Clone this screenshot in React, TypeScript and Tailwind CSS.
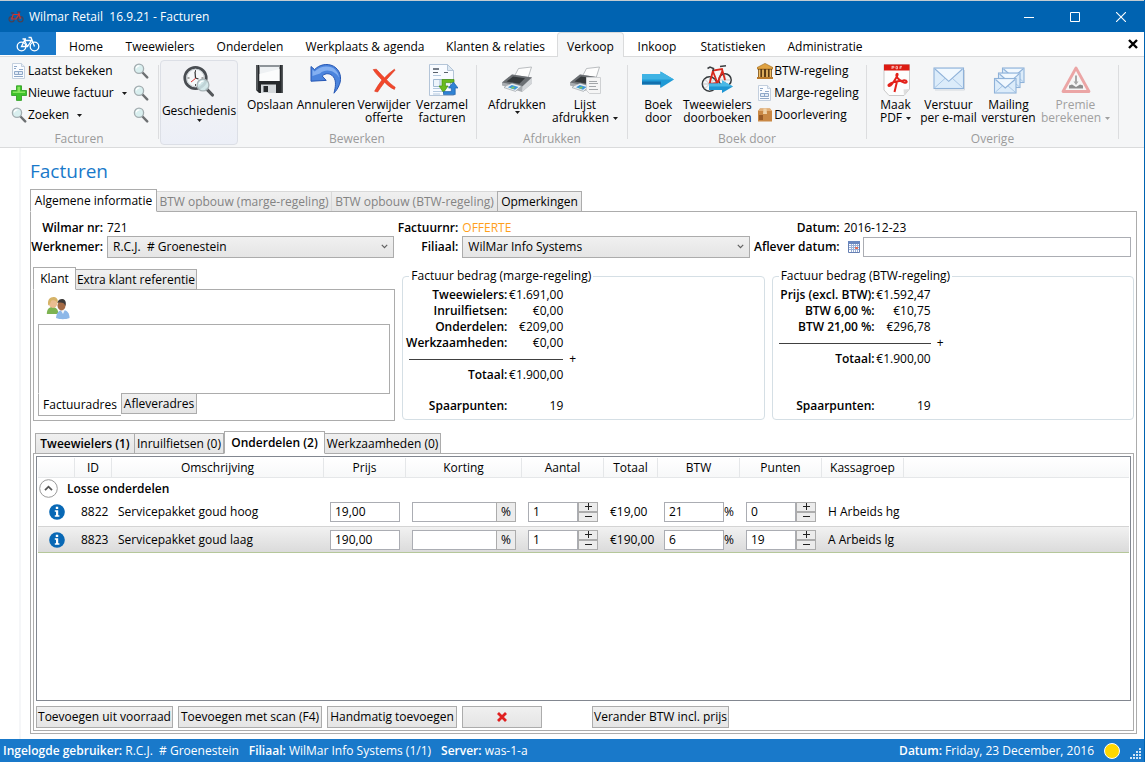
import { useState } from "react";
import type { ReactNode } from "react";
import clsx from "clsx";

/* ---------- icons ---------- */

function Magnifier({ className = "w-4 h-4" }: { className?: string }) {
    return (
        <svg viewBox="0 0 16 16" className={className} aria-hidden="true">
            <path d="M9.5 9.5 L14.2 14.4" stroke="#6d7072" strokeWidth="2.4" strokeLinecap="round" />
            <circle cx="6" cy="5.8" r="4.6" fill="#d9efef" stroke="#a3adb0" strokeWidth="1.3" />
            <path d="M3.2 5.4 A3 3 0 0 1 6.4 2.9" fill="none" stroke="#fff" strokeWidth="1.2" />
        </svg>
    );
}

function InvoiceIcon({ lines = "#8fa8c8" }: { lines?: string }) {
    return (
        <svg viewBox="0 0 16 16" className="w-4 h-4" aria-hidden="true">
            <path d="M1.5 .5 H10.5 L13.5 3.5 V15.5 H1.5 Z" fill="#fafcff" stroke="#c3cfde" />
            <path d="M10.5 .5 V3.5 H13.5" fill="#e6edf5" stroke="#c3cfde" />
            <path d="M3 3.5 H6 M3 5.5 H5 M8 6.5 H12 M3 13.5 H12" stroke={lines} />
            <path d="M3.5 8.5 H11.5 V11.5 H3.5 Z M7.5 8.5 V11.5" fill="#e2ebf6" stroke={lines} />
        </svg>
    );
}

function PlusIcon() {
    return (
        <svg viewBox="0 0 16 16" className="w-4 h-4" aria-hidden="true">
            <path d="M5.5 .8 H10.5 V5.5 H15.5 V10.5 H10.5 V15.4 H5.5 V10.5 H.6 V5.5 H5.5 Z" fill="#3fc32b" stroke="#2a9a1c" strokeWidth=".8" />
            <path d="M6.5 1.8 H9 V6.6 H14 V8 H1.8 V6.6 H6.5 Z" fill="#86e45f" />
        </svg>
    );
}

function HistoryIcon() {
    return (
        <svg viewBox="0 0 32 32" className="w-8 h-8" aria-hidden="true">
            <circle cx="12.5" cy="13" r="10.7" fill="#f6f8f9" stroke="#494d52" strokeWidth="2.8" />
            <circle cx="12.5" cy="13" r="8.8" fill="none" stroke="#b8bfc4" strokeWidth=".8" />
            <path d="M12.5 5 V7 M4.5 13 H6.5 M12.5 19 V21 M18.5 13 H20.5" stroke="#555" />
            <path d="M12.5 13 L12 6.6 M12.5 13 L15.5 14" stroke="#333" strokeWidth="1.2" />
            <path d="M12.8 13.2 L8 17" stroke="#d33" />
            <path d="M24 24.4 L29.4 30" stroke="#55585b" strokeWidth="3.2" strokeLinecap="round" />
            <circle cx="20" cy="20" r="5.9" fill="#cfe6e8" fillOpacity=".88" stroke="#a9b4b7" strokeWidth="1.3" />
            <path d="M16.5 19 A4 4 0 0 1 20.5 16" fill="none" stroke="#fff" strokeWidth="1.2" />
        </svg>
    );
}

function SaveIcon() {
    return (
        <svg viewBox="0 0 32 32" className="w-8 h-8" aria-hidden="true">
            <path d="M2 1 H29 V29 H5 L2 26 Z" fill="#25282b" />
            <path d="M2 1 H4 V26 H2 Z M27.5 1 H29 V29 H27.5 Z" fill="#54585b" />
            <path d="M5.5 1 H25.5 V17 H5.5 Z" fill="#eef1f3" />
            <path d="M5.5 1 H25.5 V3 H5.5 Z" fill="#8e9499" />
            <path d="M5.5 10 L25.5 5 V17 H5.5 Z" fill="#fbfcfc" />
            <path d="M7 20.5 H22 V29 H7 Z" fill="#d4d8db" />
            <path d="M9.5 22 H14 V28 H9.5 Z" fill="#26292c" />
        </svg>
    );
}

function UndoIcon() {
    return (
        <svg viewBox="0 0 32 32" className="w-8 h-8" aria-hidden="true">
            <path
                d="M1 2.5 L4.6 5.6 C9 .8 17 -1.2 23.5 2.2 C30.4 6 32 14 29.4 20.5 C28 24.2 26.2 26.8 24 29.2 C25.5 23 26.6 17 23.4 12.8 C20.4 9 15.6 8.7 12.2 12 L16.2 16.4 L1 17.2 Z"
                fill="#4b84dd"
                stroke="#2657b4"
            />
            <path d="M2.4 5.6 L4.7 7.5 C9 3 16 1 22 3.6 C26 5.6 28.6 9.5 29 13.5 C25.5 7 16 3.8 10 9.5 L2.4 12 Z" fill="#84b0f1" />
        </svg>
    );
}

function RedCrossIcon() {
    return (
        <svg viewBox="0 0 32 32" className="w-8 h-8" aria-hidden="true">
            <path
                d="M5.2 5.6 L8.4 5.2 C11.2 8.4 14 11.4 16.6 13.8 C19.4 10.8 22.8 7.6 26.4 5.2 L27 6.2 C23.8 9.8 21 12.6 18.5 15.7 C21.2 18.6 24.4 21.4 27.2 23.2 L26.4 25.4 C22.8 24 19.5 21.1 16.6 18.2 C14 21.6 11.6 25 9.6 28 L6.6 27.2 C8.8 23 11.4 19.4 14 16 C10.8 12.8 7.8 9.8 5.2 5.6 Z"
                fill="#f2472b"
                stroke="#d9351c"
                strokeWidth=".6"
            />
        </svg>
    );
}

function CollectIcon() {
    return (
        <svg viewBox="0 0 32 32" className="w-8 h-8" aria-hidden="true">
            <path d="M3.5 .5 H21.5 L27.5 6.5 V31.5 H3.5 Z" fill="#f8fbff" stroke="#b4c5d8" />
            <path d="M21.5 .5 V6.5 H27.5 Z" fill="#dde8f2" stroke="#b4c5d8" />
            <path d="M7 5 H13" stroke="#56606c" strokeWidth="1.6" />
            <path d="M7 8.5 H12 M18 8.5 H22" stroke="#56606c" />
            <path d="M7 11.5 H15 M7 24.5 H14 M7 27.5 H18 M7 30 H14" stroke="#b3c8de" />
            <path d="M7.5 15.5 H24.5 V22.5 H7.5 Z M14 15.5 V22.5" fill="#edf4fb" stroke="#9fb9d2" />
            <path d="M28 15.5 H16 V22 H13 L17.5 28.5 L22 22 H19.4 V18.6 H28 Z" fill="#6abb1d" stroke="#3f8f10" strokeWidth=".7" />
            <path d="M17.5 30.6 V27.6 H25.3 V24 H22.6 L27.4 18 L32 24 H29.2 V30.6 Z" fill="#2f83d5" stroke="#1b5fa9" strokeWidth=".7" />
        </svg>
    );
}

function PrinterIcon({ list = false }: { list?: boolean }) {
    return (
        <svg viewBox="0 0 32 32" className="w-8 h-8" aria-hidden="true">
            <path d="M13 13 L17.5 4.5 L30.5 3 L27 14 Z" fill="#fdfdfd" stroke="#a9adb1" strokeWidth=".8" />
            <path d="M1 18.5 L11 10.5 L31 13.5 V19.5 L21 28 L1 21.5 Z" fill="#a9adb1" />
            <path d="M1 18.5 L11 10.5 L31 13.5 L21.5 22.5 Z" fill="#6b6f73" />
            <path d="M5.5 17.6 L12 12.4 L24 14.3 L18.4 19.8 Z" fill="#35393c" />
            <path d="M21.5 22.5 L31 13.5 V19.5 L21 28 Z" fill="#d3d6d9" />
            <path d="M5.5 21.6 L11 19.2 L20.5 22 L14.5 27.4 L3 23.6 Z" fill="#e9eef2" stroke="#8f969b" strokeWidth=".6" />
            <path d="M7 23.3 L10.8 21 L17.5 23 L14 25.8 Z" fill="#3c96d8" />
            <path d="M9.5 24 L12 22.4 L14 23.1 L12 25 Z" fill="#79c465" />
            {list && (
                <>
                    <path d="M17.5 13.5 H31.5 V29.5 H20.5 L17.5 26.5 Z" fill="#f5f5f5" stroke="#cfd1d3" />
                    <path d="M20 17.5 H28 M20 19.5 H29 M20 22.5 H27 M20 25.5 H29" stroke="#a3a6a9" />
                </>
            )}
        </svg>
    );
}

function ArrowIcon() {
    return (
        <svg viewBox="0 0 32 32" className="w-8 h-8" aria-hidden="true">
            <path d="M0 10 H18.5 V7.5 L32 15.5 L18.5 24 V20.5 H0 Z" fill="#1f9ad6" />
            <path d="M0 10 H18.5 V7.5 L32 15.5 H0 Z" fill="#3fb3e4" />
            <path d="M0 17.5 H19 V22.8 L18.5 24 V20.5 H0 Z" fill="#1270ae" />
        </svg>
    );
}

function BikeArrowIcon() {
    return (
        <svg viewBox="0 0 32 32" className="w-8 h-8" aria-hidden="true">
            <g fill="none" stroke="#34383b" strokeWidth="1.5">
                <circle cx="8.5" cy="20" r="7.2" />
                <circle cx="24" cy="16" r="6.2" />
            </g>
            <g fill="none" stroke="#a7abae" strokeWidth=".6">
                <path d="M8.5 13 V27 M1.5 20 H15.5 M3.5 15 L13.5 25 M13.5 15 L3.5 25 M24 10 V22 M18 16 H30" />
            </g>
            <path d="M8.5 20 L12 6.5 L21 5 L24 16 M12 7.5 L16.5 19 L21.5 6.5 M8.5 20 L16.5 19" fill="none" stroke="#d9281c" strokeWidth="1.8" />
            <path d="M6.5 4.5 L9 3 L12.5 4.5 L12 7 M19 2.5 L25 1.8" fill="none" stroke="#3b3e41" strokeWidth="1.5" />
            <path d="M8 19.5 H21 V16.5 L32 22.5 L21 29 V26 H8 Z" fill="#1e96d3" />
            <path d="M8 19.5 H21 V16.5 L32 22.5 H8 Z" fill="#49b8e6" />
        </svg>
    );
}

function BankIcon() {
    return (
        <svg viewBox="0 0 16 16" className="w-4 h-4" aria-hidden="true">
            <path d="M0 4.6 L8 .4 L16 4.6 V6 H0 Z" fill="#e0a343" stroke="#9b6418" strokeWidth=".6" />
            <path d="M1 6 H15 V14 H1 Z" fill="#5b3a14" />
            <path d="M2.5 6.5 V14 M6 6.5 V14 M10 6.5 V14 M13.5 6.5 V14" stroke="#f2c068" strokeWidth="1.7" />
            <path d="M0 14 H16 V16 H0 Z" fill="#b9792a" />
        </svg>
    );
}

function BoxIcon() {
    return (
        <svg viewBox="0 0 16 16" className="w-4 h-4" aria-hidden="true">
            <path d="M1 4 L3 1.5 H13 L15 4 V14.5 H1 Z" fill="#c98845" />
            <path d="M1 4 L3 1.5 H13 L15 4 Z" fill="#e3b078" />
            <path d="M6.5 1.5 H9.5 L10 7 H6 Z" fill="#f0d2a8" />
            <path d="M2 8 H6 V13 H2 Z" fill="#9a5b26" />
        </svg>
    );
}

function PdfIcon() {
    return (
        <svg viewBox="0 0 32 32" className="w-8 h-8" aria-hidden="true">
            <path d="M4 .5 H29.5 V25 L24 31.5 H9 L4 26 Z" fill="#fdfdfd" stroke="#c9c9c9" />
            <path d="M4 .5 H29.5 V6.5 H4 Z" fill="#dd1b12" />
            <path d="M12 2 V5 M12 2.4 H14 V3.8 H12 M16 2.4 H17.5 V4.8 H16 Z M20 5 V2.4 H22 M20 3.8 H21.6" fill="none" stroke="#fbd0cc" strokeWidth=".8" />
            <path
                d="M17.2 9.5 C14.4 11.5 19 17 24 18.5 C28 19.4 27.5 15.8 23 16.4 C17 17 11 18.2 8.8 20.6 C7.4 22.6 10.4 22.4 12 20 C15.8 14.6 18.8 10.4 17.2 9.5 M17 17.5 L14.5 28"
                fill="none"
                stroke="#e3211a"
                strokeWidth="2"
            />
            <path d="M24 31.5 L23.5 25.5 L29.5 25 Z" fill="#dedede" />
        </svg>
    );
}

function Envelope({ x, y, w, h }: { x: number; y: number; w: number; h: number }) {
    return (
        <g>
            <rect x={x} y={y} width={w} height={h} fill="#dcecfa" stroke="#8fb2d9" strokeWidth="1.1" />
            <path
                d={`M${x + 1} ${y + h - 1} L${x + w * 0.38} ${y + h * 0.5} M${x + w - 1} ${y + h - 1} L${x + w * 0.62} ${y + h * 0.5}`}
                stroke="#a9c7e6"
            />
            <path d={`M${x + 1} ${y + 1} L${x + w / 2} ${y + h * 0.65} L${x + w - 1} ${y + 1}`} fill="#f1f8fe" stroke="#8fb2d9" strokeWidth="1.1" />
        </g>
    );
}

function MailIcon() {
    return (
        <svg viewBox="0 0 32 32" className="w-8 h-8" aria-hidden="true">
            <path d="M2 26 H31.5 V6" fill="none" stroke="#d3d8dd" />
            <Envelope x={1} y={4} w={29.5} h={20.5} />
        </svg>
    );
}

function MailingIcon() {
    return (
        <svg viewBox="0 0 32 32" className="w-8 h-8" aria-hidden="true">
            <Envelope x={9.5} y={4} w={21.5} h={14.5} />
            <Envelope x={5.5} y={9} w={21.5} h={14.5} />
            <Envelope x={1.5} y={14.5} w={21.5} h={14.5} />
        </svg>
    );
}

function PremiumIcon() {
    return (
        <svg viewBox="0 0 32 32" className="w-8 h-8" aria-hidden="true">
            <path d="M16 4 L29 27.5 H3 Z" fill="#f6f6f6" stroke="#eba5a5" strokeWidth="2.8" strokeLinejoin="round" />
            <path d="M9 21.5 L12 20.5 L16 23 L20 20.5 L23 21.5 V24.5 H9 Z" fill="#8d8d8d" />
            <path d="M15 11.5 H17 V18.5 H15 Z M13.5 17.5 H18.5 L16 21 Z" fill="#a7a7a7" />
        </svg>
    );
}

function WhiteBike() {
    return (
        <svg viewBox="0 0 24 16" className="w-6 h-4" fill="none" stroke="#fff" strokeWidth="1.3" aria-hidden="true">
            <circle cx="5.5" cy="10.5" r="4.3" />
            <circle cx="18.5" cy="10.5" r="4.3" />
            <path d="M5.5 10.5 L8.5 4.5 H15.5 L11.5 10.5 Z M8.5 4.5 L11.5 10.5 M18.5 10.5 L15 1.5 H12.5 M6.5 3 H10" />
        </svg>
    );
}

function AppIcon() {
    return (
        <svg viewBox="0 0 16 16" className="w-4 h-4" fill="none" aria-hidden="true">
            <circle cx="3.6" cy="10.2" r="2.6" stroke="#4a4152" strokeWidth="1.2" />
            <circle cx="12.4" cy="10.2" r="2.6" stroke="#4a4152" strokeWidth="1.2" />
            <path d="M3.6 10 L5.2 5.5 H11 L8 10 Z M12.4 10 L10.6 3" stroke="#d4322c" strokeWidth="1.2" />
            <path d="M2.8 4 H6.2 M9 3 H12.4" stroke="#6d2a35" strokeWidth="1.2" />
        </svg>
    );
}

function PeopleIcon() {
    return (
        <svg viewBox="0 0 24 24" className="w-6 h-6" aria-hidden="true">
            <path d="M.8 18 C.8 13.5 3 11 6.5 11 C10 11 12 13 12.5 18 Z" fill="#7db352" />
            <ellipse cx="7" cy="7" rx="4.3" ry="5" fill="#e9bd91" />
            <path d="M2.2 9.5 C1.2 3.5 4 .8 8 1 C11.5 1.4 12.3 4.5 11.8 7.5 C10.5 4.4 8 3.6 5.4 4.6 C4.2 6.4 4.6 8.4 2.2 9.5 Z" fill="#d6b368" />
            <path d="M10 22 C10.4 17 12.6 14 17 14 C21.2 14 23.4 17 23.6 22 C19.5 23.6 14 23.6 10 22 Z" fill="#8db8e8" />
            <path d="M14.6 14 L17 18 L18.8 14 Z" fill="#f2f6fa" />
            <ellipse cx="15.5" cy="9.6" rx="4" ry="4.9" fill="#a56b45" />
            <path d="M11.5 7 C12 3.6 14.5 2.8 16.5 3 C20 3.6 20.4 7.5 19.4 10 C18.6 6.8 15.5 6 11.5 7 Z" fill="#3d3a38" />
        </svg>
    );
}

function CalendarIcon() {
    return (
        <svg viewBox="0 0 12 12" className="w-3 h-3" aria-hidden="true">
            <path d="M.5 .5 H11.5 V11.5 H.5 Z" fill="#fff" stroke="#6680b3" />
            <path d="M0 0 H12 V3 H0 Z" fill="#6a87bf" />
            <path d="M3.5 3 V11 M5.5 3 V11 M7.5 3 V11 M9.5 3 V11 M1 4.5 H11 M1 6.5 H11 M1 8.5 H11" stroke="#9bb0d6" />
            <path d="M7 6 H10 V8 H7 Z" fill="#e2705c" />
        </svg>
    );
}

function InfoIcon() {
    return (
        <svg viewBox="0 0 16 16" className="w-4 h-4" aria-hidden="true">
            <circle cx="8" cy="8" r="7.8" fill="#0868b5" />
            <path d="M6.8 2.8 H9.2 V4.9 H6.8 Z M5.8 6.3 H9.2 V11.3 H10.4 V12.8 H5.8 V11.3 H7 V7.7 H5.8 Z" fill="#fff" />
        </svg>
    );
}

function Caret({ muted = false }: { muted?: boolean }) {
    return (
        <svg viewBox="0 0 5 3" className="inline-block w-[5px] h-[3px] shrink-0" aria-hidden="true">
            <path d="M0 0 H5 L2.5 3 Z" fill={muted ? "#a0a0a0" : "#1a1a1a"} />
        </svg>
    );
}

/* ---------- ribbon ---------- */

const ribbonTabs = [
    { label: "Home", width: "w-[60px]" },
    { label: "Tweewielers", width: "w-[88px]" },
    { label: "Onderdelen", width: "w-[92px]" },
    { label: "Werkplaats & agenda", width: "w-[138px]" },
    { label: "Klanten & relaties", width: "w-[123px]" },
    { label: "Verkoop", width: "w-[67px]" },
    { label: "Inkoop", width: "w-[66px]" },
    { label: "Statistieken", width: "w-[86px]" },
    { label: "Administratie", width: "w-[98px]" },
];

function RibbonGroup({ title, width, children }: { title: string; width: string; children: ReactNode }) {
    return (
        <section className={clsx("flex shrink-0", width)}>
            <div className="flex flex-col flex-1 pt-[7px] min-w-0">
                <div className="flex flex-1 justify-center">{children}</div>
                <h2 className="h-4 leading-4 text-center text-[#9b9b9b]">{title}</h2>
            </div>
            <div className="w-px mt-2 mb-2 bg-[#dcdddf]" />
        </section>
    );
}

type BigButtonProps = {
    icon: ReactNode;
    label: string;
    width: string;
    caret?: "inline" | "below";
    disabled?: boolean;
};

function BigButton({ icon, label, width, caret, disabled = false }: BigButtonProps) {
    return (
        <button
            disabled={disabled}
            className={clsx("flex flex-col items-center shrink-0 h-[62px] leading-[13px]", width, disabled && "text-[#a0a0a0]")}
        >
            {icon}
            <span className="mt-0.5 whitespace-pre text-center">
                {label}
                {caret === "inline" && (
                    <span className="ml-1 align-middle leading-[0]">
                        <Caret muted={disabled} />
                    </span>
                )}
            </span>
            {caret === "below" && <Caret />}
        </button>
    );
}

function SmallButton({ icon, label, caret = false }: { icon: ReactNode; label: string; caret?: boolean }) {
    return (
        <button className="flex items-center h-[22px] whitespace-nowrap">
            {icon}
            <span className="ml-px">{label}</span>
            {caret && (
                <span className="ml-2 leading-none">
                    <Caret />
                </span>
            )}
        </button>
    );
}

function Ribbon() {
    return (
        <div className="flex h-[91px] bg-[#f5f6f7] border-b border-[#dadbdc] overflow-hidden">
            <RibbonGroup title="Facturen" width="w-[159px]">
                <div className="flex flex-1 justify-between -mt-1 pl-[11px] pr-[9px]">
                    <div>
                        <SmallButton icon={<InvoiceIcon />} label="Laatst bekeken" />
                        <SmallButton icon={<PlusIcon />} label="Nieuwe factuur" caret />
                        <SmallButton icon={<Magnifier />} label="Zoeken" caret />
                    </div>
                    <div>
                        {["Laatst bekeken", "Factuur", "Klant"].map((item) => (
                            <button key={item} aria-label={`${item} zoeken`} className="flex items-center h-[22px]">
                                <Magnifier />
                            </button>
                        ))}
                    </div>
                </div>
            </RibbonGroup>

            <button className="flex flex-col items-center shrink-0 w-[78px] mt-[3px] mb-0.5 ml-px pt-1 border border-[#dcdfe6] rounded-sm bg-linear-to-b from-[#f1f2f5] from-45% to-[#eceff7]">
                <HistoryIcon />
                <span className="mt-1.5">Geschiedenis</span>
                <Caret />
            </button>

            <RibbonGroup title="Bewerken" width="w-[239px]">
                <BigButton icon={<SaveIcon />} label="Opslaan" width="w-[54px]" />
                <BigButton icon={<UndoIcon />} label="Annuleren" width="w-[58px]" />
                <BigButton icon={<RedCrossIcon />} label={"Verwijder\nofferte"} width="w-[58px]" />
                <BigButton icon={<CollectIcon />} label={"Verzamel\nfacturen"} width="w-[58px]" />
            </RibbonGroup>
            <RibbonGroup title="Afdrukken" width="w-[151px]">
                <BigButton icon={<PrinterIcon />} label="Afdrukken" width="w-[66px]" caret="below" />
                <BigButton icon={<PrinterIcon list />} label={"Lijst\nafdrukken"} width="w-[70px]" caret="inline" />
            </RibbonGroup>
            <RibbonGroup title="Boek door" width="w-[239px]">
                <BigButton icon={<ArrowIcon />} label={"Boek\ndoor"} width="w-[46px]" />
                <BigButton icon={<BikeArrowIcon />} label={"Tweewielers\ndoorboeken"} width="w-[72px]" />
                <div className="-mt-1 ml-1">
                    <SmallButton icon={<BankIcon />} label="BTW-regeling" />
                    <SmallButton icon={<InvoiceIcon />} label="Marge-regeling" />
                    <SmallButton icon={<BoxIcon />} label="Doorlevering" />
                </div>
            </RibbonGroup>
            <RibbonGroup title="Overige" width="w-[252px]">
                <BigButton icon={<PdfIcon />} label={"Maak\nPDF"} width="w-[46px]" caret="inline" />
                <BigButton icon={<MailIcon />} label={"Verstuur\nper e-mail"} width="w-[60px]" />
                <BigButton icon={<MailingIcon />} label={"Mailing\nversturen"} width="w-[60px]" />
                <BigButton icon={<PremiumIcon />} label={"Premie\nberekenen"} width="w-[74px]" caret="inline" disabled />
            </RibbonGroup>
        </div>
    );
}

/* ---------- form parts ---------- */

type TabProps = {
    label: string;
    width: string;
    selected?: boolean;
    disabled?: boolean;
    bold?: boolean;
    onClick?: () => void;
};

function Tab({ label, width, selected = false, disabled = false, bold = false, onClick }: TabProps) {
    return (
        <button
            role="tab"
            aria-selected={selected}
            disabled={disabled}
            onClick={onClick}
            className={clsx(
                "flex justify-center items-center shrink-0 border whitespace-nowrap",
                width,
                bold && "font-semibold",
                selected
                    ? "h-[23px] -mb-px border-[#acacac] border-b-white bg-white relative z-10"
                    : "h-[20px] border-b-0 -ml-px first:ml-0.5 bg-linear-to-b from-[#f0f0f0] to-[#e5e5e5]",
                !selected && (disabled ? "border-[#d9d9d9] text-[#838383]" : "border-[#acacac]"),
            )}
        >
            {label}
        </button>
    );
}

function Dropdown({ id, value }: { id: string; value: string }) {
    return (
        <div className="relative">
            <select
                id={id}
                className="block w-full h-[22px] pl-[5px] pr-6 appearance-none border border-[#acacac] bg-linear-to-b from-[#f0f0f0] to-[#e5e5e5]"
            >
                <option>{value}</option>
            </select>
            <svg viewBox="0 0 7 5" className="absolute right-1.5 top-2 w-[7px] h-[5px] pointer-events-none" aria-hidden="true">
                <path d="M.8 .8 L3.5 3.6 L6.2 .8" fill="none" stroke="#606060" strokeWidth="1.2" />
            </svg>
        </div>
    );
}

type AmountsProps = {
    title: string;
    rows: [string, string][];
    width: string;
    spacer: string;
};

function Amounts({ title, rows, width, spacer }: AmountsProps) {
    const row = (label: string, value: string) => (
        <div key={label} className="flex justify-end h-4">
            <dt className="font-semibold whitespace-nowrap">{label}</dt>
            <dd className="w-[56px] shrink-0 text-right">{value}</dd>
        </div>
    );
    return (
        <fieldset className="min-w-0 mb-px px-1.5 border border-[#d5dfe5] rounded leading-4">
            <legend className="px-0.5 leading-[18px]">{title}</legend>
            <dl className={clsx("pt-0.5", width)}>
                {rows.map(([label, value]) => row(label, value))}
                <div className="flex items-center h-4">
                    <div className="w-full shrink-0 h-px bg-[#404040]" />
                    <span className="ml-1.5">+</span>
                </div>
                {row("Totaal:", "€1.900,00")}
                <div className={spacer} />
                {row("Spaarpunten:", "19")}
            </dl>
        </fieldset>
    );
}

function Customer() {
    const [tab, setTab] = useState("Klant");
    const [address, setAddress] = useState("Factuuradres");
    return (
        <div className="flex flex-col">
            <div role="tablist" className="flex items-end">
                <Tab label="Klant" width="w-[43px]" selected={tab === "Klant"} onClick={() => setTab("Klant")} />
                <Tab
                    label="Extra klant referentie"
                    width="w-[122px]"
                    selected={tab === "Extra"}
                    onClick={() => setTab("Extra")}
                />
            </div>
            <div className="flex-1 px-1 border border-[#acacac]">
                <button aria-label="Klant zoeken" className="block mt-1.5 ml-2">
                    <PeopleIcon />
                </button>
                <textarea aria-label={address} className="block w-full h-[70px] mt-1 border border-[#acacac] resize-none" />
                <div role="tablist" className="flex items-start -mt-px">
                    {["Factuuradres", "Afleveradres"].map((item) => (
                        <button
                            key={item}
                            role="tab"
                            aria-selected={address === item}
                            onClick={() => setAddress(item)}
                            className={clsx(
                                "border border-[#acacac] whitespace-nowrap",
                                address === item
                                    ? "w-[83px] h-[23px] border-t-white border-r-0 bg-white"
                                    : "w-[76px] h-[21px] bg-linear-to-b from-[#f0f0f0] to-[#e5e5e5]",
                            )}
                        >
                            {item}
                        </button>
                    ))}
                </div>
            </div>
        </div>
    );
}

/* ---------- order lines ---------- */

const columns = [
    { label: "", width: "w-[37px]" },
    { label: "ID", width: "w-[37px]" },
    { label: "Omschrijving", width: "w-[212px]" },
    { label: "Prijs", width: "w-[82px]" },
    { label: "Korting", width: "w-[116px]" },
    { label: "Aantal", width: "w-[82px]" },
    { label: "Totaal", width: "w-[54px]" },
    { label: "BTW", width: "w-[82px]" },
    { label: "Punten", width: "w-[82px]" },
    { label: "Kassagroep", width: "w-[82px]" },
    { label: "", width: "" },
];

const parts = [
    { id: "8822", name: "Servicepakket goud hoog", price: "19,00", count: 1, total: "€19,00", vat: "21", points: 0, group: "H Arbeids hg" },
    { id: "8823", name: "Servicepakket goud laag", price: "190,00", count: 1, total: "€190,00", vat: "6", points: 19, group: "A Arbeids lg" },
];

const field = "h-5 px-1 border border-[#abadb3] bg-white";

function Stepper({ label, start }: { label: string; start: number }) {
    const [value, setValue] = useState(start);
    const step = "flex items-center justify-center h-2.5 border border-[#acacac] bg-[#ececec]";
    return (
        <div className="flex">
            <input
                aria-label={label}
                className={clsx(field, "w-[50px]")}
                value={value}
                onChange={(e) => setValue(Number(e.target.value) || 0)}
            />
            <div className="flex flex-col w-5">
                <button aria-label={`${label} meer`} className={step} onClick={() => setValue(value + 1)}>
                    <svg viewBox="0 0 9 7" className="w-[9px] h-[7px]" aria-hidden="true">
                        <path d="M4.5 0 V7 M1 3.5 H8" stroke="#222" />
                    </svg>
                </button>
                <button aria-label={`${label} minder`} className={step} onClick={() => setValue(value - 1)}>
                    <svg viewBox="0 0 9 7" className="w-[9px] h-[7px]" aria-hidden="true">
                        <path d="M1 3.5 H8" stroke="#222" />
                    </svg>
                </button>
            </div>
        </div>
    );
}

function PartsTable() {
    return (
        <table className="w-full table-fixed border-separate border-spacing-0 text-left whitespace-nowrap">
            <thead>
                <tr>
                    {columns.map((column, i) => (
                        <th
                            key={i}
                            className={clsx(
                                "h-5 p-0 font-normal text-center border-b border-[#e5e7e9] bg-linear-to-b from-white to-[#f7f8f9]",
                                i < columns.length - 1 && "border-r",
                                column.width,
                            )}
                        >
                            {column.label}
                        </th>
                    ))}
                </tr>
            </thead>
            <tbody>
                <tr>
                    <th colSpan={11} className="h-[21px] p-0 pl-px">
                        <button className="flex items-center gap-[9px] font-semibold">
                            <svg viewBox="0 0 19 19" className="w-[19px] h-[19px]" fill="none" aria-hidden="true">
                                <circle cx="9.5" cy="9.5" r="8.8" fill="#fff" stroke="#9a9a9a" />
                                <path d="M6 11.2 L9.5 7.7 L13 11.2" stroke="#555" strokeWidth="1.8" />
                            </svg>
                            Losse onderdelen
                        </button>
                    </th>
                </tr>
                {parts.map((part, i) => (
                    <tr
                        key={part.id}
                        className={clsx(
                            "[&>td]:h-[27px] [&>td]:p-0 [&>td]:pl-1.5",
                            i === 0 && "[&>td]:pb-0.5",
                            i === 1 &&
                                "bg-linear-to-b from-[#f2f2f2] to-[#dadada] [&>td]:border-y [&>td]:border-t-[#d4d4d4] [&>td]:border-b-[#b5c79a]",
                        )}
                    >
                        <td>
                            <div className="pl-[5px]">
                                <InfoIcon />
                            </div>
                        </td>
                        <td>{part.id}</td>
                        <td>{part.name}</td>
                        <td>
                            <input aria-label="Prijs" className={clsx(field, "block w-[70px]")} defaultValue={part.price} />
                        </td>
                        <td>
                            <div className="flex">
                                <input aria-label="Korting" className={clsx(field, "w-[85px]")} />
                                <button className="w-5 h-5 -ml-px border border-[#acacac] bg-[#ececec]">%</button>
                            </div>
                        </td>
                        <td>
                            <Stepper label="Aantal" start={part.count} />
                        </td>
                        <td>{part.total}</td>
                        <td>
                            <div className="flex items-center">
                                <input aria-label="BTW" className={clsx(field, "w-[60px]")} defaultValue={part.vat} />%
                            </div>
                        </td>
                        <td>
                            <Stepper label="Punten" start={part.points} />
                        </td>
                        <td>{part.group}</td>
                        <td />
                    </tr>
                ))}
            </tbody>
        </table>
    );
}

function PushButton({ width, children, label }: { width: string; children: ReactNode; label?: string }) {
    return (
        <button
            aria-label={label}
            className={clsx(
                "flex items-center justify-center h-[22px] shrink-0 border border-[#acacac] bg-linear-to-b from-[#f0f0f0] to-[#e5e5e5] whitespace-nowrap",
                width,
            )}
        >
            {children}
        </button>
    );
}

/* ---------- window ---------- */

function TitleBar() {
    return (
        <header className="flex items-center h-8 pl-2 text-white bg-[#0063b1] border-t border-[#c3ccd2]">
            <AppIcon />
            <h1 className="flex-1 ml-[5px] whitespace-pre">Wilmar Retail  16.9.21 - Facturen</h1>
            <button aria-label="Minimaliseren" className="flex justify-center w-[46px]">
                <svg viewBox="0 0 10 10" className="w-2.5 h-2.5" aria-hidden="true">
                    <path d="M0 5.5 H10" stroke="#fff" />
                </svg>
            </button>
            <button aria-label="Maximaliseren" className="flex justify-center w-[46px]">
                <svg viewBox="0 0 10 10" className="w-2.5 h-2.5" aria-hidden="true">
                    <path d="M.5 .5 H9.5 V9.5 H.5 Z" fill="none" stroke="#fff" />
                </svg>
            </button>
            <button aria-label="Sluiten" className="flex justify-center w-[46px]">
                <svg viewBox="0 0 10 10" className="w-2.5 h-2.5" aria-hidden="true">
                    <path d="M0 0 L10 10 M10 0 L0 10" stroke="#fff" strokeWidth="1.1" />
                </svg>
            </button>
        </header>
    );
}

function StatusBar() {
    return (
        <footer className="flex items-center h-[23px] pl-[3px] pr-0.5 gap-2.5 text-white bg-[#1979ca] whitespace-pre">
            <span>
                <b className="font-semibold">Ingelogde gebruiker:</b> R.C.J.  # Groenestein
            </span>
            <span>
                <b className="font-semibold">Filiaal:</b> WilMar Info Systems (1/1)
            </span>
            <span>
                <b className="font-semibold">Server:</b> was-1-a
            </span>
            <span className="ml-auto">
                <b className="font-semibold">Datum:</b> Friday, 23 December, 2016
            </span>
            <span className="w-4 h-4 rounded-full border border-white bg-[#ffd800]" />
            <svg viewBox="0 0 12 12" className="w-3 h-3 self-end mb-0.5" fill="#cfe3f5" aria-hidden="true">
                <path d="M9 0h2v2h-2z M6 3h2v2h-2z M9 3h2v2h-2z M3 6h2v2h-2z M6 6h2v2h-2z M9 6h2v2h-2z M0 9h2v2h-2z M3 9h2v2h-2z M6 9h2v2h-2z M9 9h2v2h-2z" />
            </svg>
        </footer>
    );
}

const formLabel = "flex justify-end font-semibold whitespace-nowrap";

export default function App() {
    const [ribbonTab, setRibbonTab] = useState("Verkoop");
    return (
        <div className="flex flex-col min-h-screen bg-white border-r border-[#0063b1] text-black text-[12px] leading-4 font-['Open_Sans','Noto_Sans',sans-serif]">
            <TitleBar />

            <nav className="flex h-[25px] border-b border-[#dadbdc] bg-white">
                <button aria-label="Bestand" className="flex items-center justify-center w-14 h-[23px] bg-[#1979ca]">
                    <WhiteBike />
                </button>
                {ribbonTabs.map((tab) => (
                    <button
                        key={tab.label}
                        onClick={() => setRibbonTab(tab.label)}
                        className={clsx(
                            "shrink-0 whitespace-nowrap pt-1 rounded-t-sm border border-b-0",
                            tab.width,
                            tab.label === ribbonTab ? "h-[25px] border-[#dadbdc] bg-[#f5f6f7]" : "border-transparent",
                        )}
                    >
                        {tab.label}
                    </button>
                ))}
                <button aria-label="Tabblad sluiten" className="ml-auto mr-1.5">
                    <svg viewBox="0 0 10 10" className="w-2.5 h-2.5" aria-hidden="true">
                        <path d="M1 1 L9 9 M9 1 L1 9" stroke="#000" strokeWidth="2.4" />
                    </svg>
                </button>
            </nav>
            <Ribbon />

            <main className="flex flex-col flex-1 ml-[19px] pl-[9px] pr-[7px] pb-[5px] border-l-2 border-[#f5f6f8]">
                <h2 className="mt-[11px] mb-1.5 text-[19px] leading-6 text-[#1979ca]">Facturen</h2>
                <div role="tablist" className="flex items-end">
                    <Tab label="Algemene informatie" width="w-[127px]" selected />
                    <Tab label="BTW opbouw (marge-regeling)" width="w-[176px]" disabled />
                    <Tab label="BTW opbouw (BTW-regeling)" width="w-[167px]" disabled />
                    <Tab label="Opmerkingen" width="w-[85px]" />
                </div>

                <div className="flex flex-col flex-1 px-0.5 pb-0.5 border border-[#acacac]">
                    <div className="grid grid-cols-[70px_1fr_60px_1fr_86px_1fr] items-center gap-x-1 pt-2 pr-[3px]">
                        <b className={formLabel}>Wilmar nr:</b>
                        <span>721</span>
                        <b className={formLabel}>Factuurnr:</b>
                        <span className="text-[#ff9f1c]">OFFERTE</span>
                        <b className={formLabel}>Datum:</b>
                        <span>2016-12-23</span>
                        <label htmlFor="employee" className={formLabel}>
                            Werknemer:
                        </label>
                        <Dropdown id="employee" value={"R.C.J.\u00a0 # Groenestein"} />
                        <label htmlFor="branch" className={formLabel}>
                            Filiaal:
                        </label>
                        <Dropdown id="branch" value="WilMar Info Systems" />
                        <label htmlFor="delivery" className={formLabel}>
                            Aflever datum:
                        </label>
                        <div className="flex items-center gap-[3px] pl-1">
                            <button aria-label="Kies datum">
                                <CalendarIcon />
                            </button>
                            <input id="delivery" className={clsx(field, "flex-1 min-w-0")} />
                        </div>
                    </div>

                    <div className="grid grid-cols-3 gap-[7px] mt-[9px] h-[154px]">
                        <Customer />
                        <Amounts
                            title="Factuur bedrag (marge-regeling)"
                            rows={[
                                ["Tweewielers:", "€1.691,00"],
                                ["Inruilfietsen:", "€0,00"],
                                ["Onderdelen:", "€209,00"],
                                ["Werkzaamheden:", "€0,00"],
                            ]}
                            width="w-[154px]"
                            spacer="h-[15px]"
                        />
                        <Amounts
                            title="Factuur bedrag (BTW-regeling)"
                            rows={[
                                ["Prijs (excl. BTW):", "€1.592,47"],
                                ["BTW 6,00 %:", "€10,75"],
                                ["BTW 21,00 %:", "€296,78"],
                            ]}
                            width="w-[152px]"
                            spacer="h-[31px]"
                        />
                    </div>

                    <div role="tablist" className="flex items-end mt-2.5">
                        <Tab label="Tweewielers (1)" width="w-[100px]" bold />
                        <Tab label="Inruilfietsen (0)" width="w-[90px]" />
                        <Tab label="Onderdelen (2)" width="w-[101px]" selected bold />
                        <Tab label="Werkzaamheden (0)" width="w-[117px]" />
                    </div>
                    <div className="flex flex-col flex-1 p-0.5 border border-[#acacac]">
                        <div className="flex-1 p-px border border-[#828790]">
                            <PartsTable />
                        </div>
                        <div className="flex gap-[5px] mt-[5px]">
                            <PushButton width="w-[137px]">Toevoegen uit voorraad</PushButton>
                            <PushButton width="w-[144px]">Toevoegen met scan (F4)</PushButton>
                            <PushButton width="w-[130px]">Handmatig toevoegen</PushButton>
                            <PushButton width="w-[80px]" label="Verwijderen">
                                <svg viewBox="0 0 10 10" className="w-2.5 h-2.5" aria-hidden="true">
                                    <path d="M1 1 L9 9 M9 1 L1 9" stroke="#e02020" strokeWidth="2.8" />
                                </svg>
                            </PushButton>
                            <div className="w-10" />
                            <PushButton width="w-[137px]">Verander BTW incl. prijs</PushButton>
                        </div>
                    </div>
                </div>
            </main>

            <StatusBar />
        </div>
    );
}
